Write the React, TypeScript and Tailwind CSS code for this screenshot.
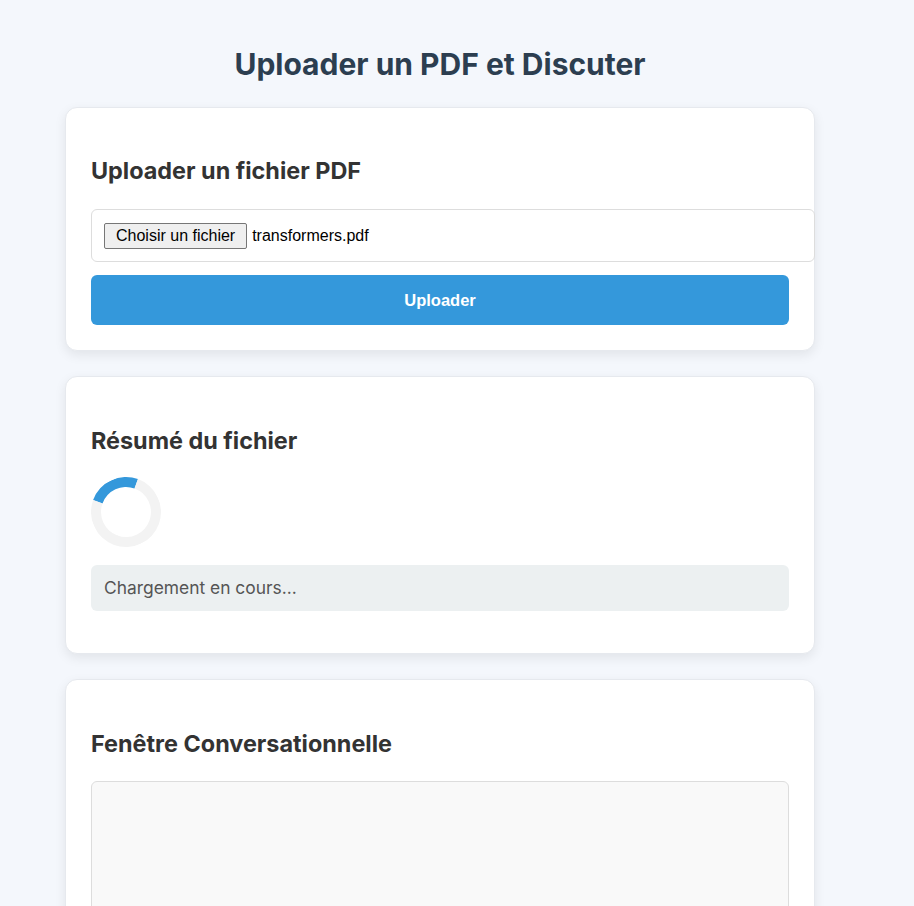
import React from "react";

const Card: React.FC<{
  title: string;
  titleClass?: string;
  children: React.ReactNode;
}> = ({ title, titleClass = "mt-[22px] mb-[20px]", children }) => (
  <section className="rounded-xl border border-[#e6e9ee] bg-white px-[25px] pb-[25px] pt-[25px] shadow-[0_4px_12px_rgba(0,0,0,0.08)]">
    <h2 className={`text-[23.4px] font-bold leading-[33px] text-[#333] ${titleClass}`}>{title}</h2>
    {children}
  </section>
);

export default function App() {
  return (
    <div className="min-h-screen bg-[#f4f7fc] font-['Inter',sans-serif]">
      <div className="ml-[65px] flex w-[750px] flex-col gap-[25px] pb-10">
        <h1 className="mb-[-2px] mt-[44px] text-center text-[30px] font-bold leading-[40px] text-[#2c3e50]">
          Uploader un PDF et Discuter
        </h1>

        <Card title="Uploader un fichier PDF" titleClass="mt-[21px] mb-[22px]">
          <div className="box-content flex h-[29px] w-full items-center rounded-md border border-[#dddddd] bg-white px-3 py-[11px]">
            <span className="rounded-[2px] border border-[#767676] bg-[#efefef] px-[11px] text-[16px] leading-[24px] text-black font-['Liberation_Sans',Arial,sans-serif]">
              Choisir un fichier
            </span>
            <span className="ml-[5px] text-[16px] text-black font-['Liberation_Sans',Arial,sans-serif]">
              transformers.pdf
            </span>
          </div>
          <button
            type="button"
            className="mt-[13px] block h-[50px] w-full rounded-md bg-[#3498db] text-[16.5px] font-bold text-white font-['Liberation_Sans',Arial,sans-serif]"
          >
            Uploader
          </button>
        </Card>

        <Card title="Résumé du fichier">
          <div className="h-[70px] w-[70px] -rotate-[25deg] rounded-full border-[10px] border-[#f3f3f3] border-t-[#3498db]" />
          <div className="mb-[17px] mt-[18px] rounded-md bg-[#ecf0f1] px-[13px] py-[10px] text-[17.4px] leading-[26px] text-[#555]">
            Chargement en cours...
          </div>
        </Card>

        <Card title="Fenêtre Conversationnelle" titleClass="mt-[22px] mb-[21px]">
          <div className="h-[300px] rounded-md border border-[#dddddd] bg-[#f9f9f9]" />
        </Card>
      </div>
    </div>
  );
}
